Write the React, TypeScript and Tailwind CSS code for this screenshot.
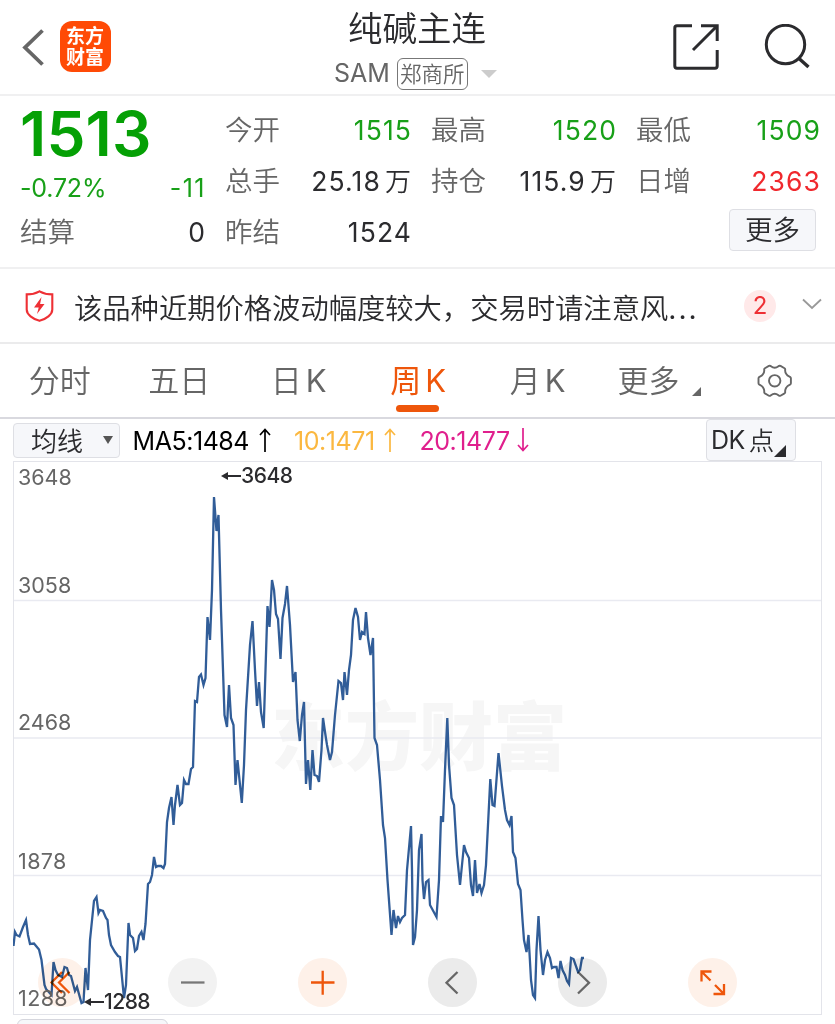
import { clsx } from "clsx"

// Weekly closes, as [x, y] on the chart canvas
const weekly = [
	[13.5, 946], [15, 932], [16.5, 935], [19.5, 936.5], [23, 927], [26, 920], [28, 935], [30, 944],
	[34, 943.5], [39, 949.5], [41.5, 960], [44.5, 985], [46, 989], [51.5, 995], [53.5, 962], [55.5, 970],
	[58, 975], [62, 977], [64.5, 967], [67, 968], [69, 975], [71, 976], [75, 991], [77, 987],
	[81.5, 1003], [83.5, 1002], [85.5, 968], [88, 990], [90, 940], [94, 901], [96.5, 897], [98.5, 913],
	[100, 910], [103, 911], [106, 918], [107.5, 920], [109, 935], [111, 945], [115, 952], [118, 956],
	[120, 957], [124, 998], [126, 985], [128.5, 923], [130, 935], [133, 938], [135, 951], [137, 949],
	[139, 936], [141.5, 932], [143.5, 940], [145.5, 924], [148, 884], [150, 882], [152, 875], [154, 857],
	[156, 867], [158, 866], [161, 866], [163.5, 868], [165, 864], [167, 822], [169, 808], [171.5, 797],
	[173.5, 825], [175, 805], [177.5, 785], [180, 805], [182, 803], [184, 780], [186, 784], [188.5, 784],
	[191, 769], [193, 767], [195, 701], [197, 702], [199, 677], [201, 674.5], [203.5, 685], [205.5, 678],
	[207.5, 617], [210, 640], [212, 590], [214, 497], [216.5, 531], [218.5, 515], [221, 610], [224.5, 715],
	[227, 727], [229, 685], [231, 718], [233.5, 725], [235.5, 785], [237.5, 760], [239, 775], [241.8, 803],
	[244, 765], [246, 710], [250, 645], [252.5, 621], [255, 670], [257, 706], [259, 682], [261, 712],
	[263.7, 728], [267.5, 606], [269.5, 627], [272, 580], [274, 590], [276, 614], [278, 619], [280.5, 659],
	[282.5, 618], [285, 604], [287, 586], [290, 625], [293, 682], [295.5, 672], [297.5, 720], [299.8, 741],
	[302, 715], [304, 702], [306, 784], [308, 760], [310.3, 790], [312.5, 750], [314.5, 775], [317, 776],
	[319, 782], [321.5, 750], [323, 718], [325, 732], [327, 745], [330, 760], [332, 752], [335, 715],
	[338.5, 681], [341, 683], [343, 700], [344.5, 672], [347, 695], [349, 670], [351, 655], [353, 620],
	[355.5, 608], [358, 617], [360, 640], [362, 632], [364.5, 634], [366, 612], [368, 638], [370.5, 655],
	[373, 638], [374.5, 738], [377, 745], [380, 780], [383, 825], [385, 838], [387.5, 880], [391.5, 935],
	[393.5, 910], [396, 928], [398, 916], [400, 922], [402, 918], [405, 915], [407, 870], [411, 826],
	[412, 870], [413, 945], [415, 937], [417, 910], [419, 850], [421.5, 834], [422.5, 880], [424, 899],
	[426, 882], [428.5, 880], [430, 905], [436.5, 917], [439, 880], [441, 816], [443, 822], [445, 770],
	[447.3, 718], [449, 765], [451.5, 798], [454, 805], [457, 855], [460, 885], [464, 845], [466, 852],
	[469, 858], [471, 885], [473, 896], [475, 860], [477, 893], [479.5, 884], [481.5, 893], [484, 885],
	[486, 865], [490.3, 779], [492.5, 805], [494.5, 806], [498.5, 753], [502, 786], [505, 810], [507, 820],
	[509.5, 825], [511.5, 816], [513, 852], [515.5, 858], [518, 884], [520.5, 890], [522.5, 920], [524, 940],
	[526.5, 952], [528.5, 935], [531, 980], [533, 995], [535, 998], [536.5, 950], [538.5, 916], [540.5, 950],
	[543, 975], [545, 960], [547.5, 952], [550, 958], [552, 968], [554, 967], [556.5, 967], [558.5, 978],
	[560.5, 961], [562.5, 970], [565, 975], [567, 981], [569, 984], [571, 958], [573.5, 959], [578, 972],
	[580, 970], [582, 958], [584, 958],
]

export default function App() {
	return (
		<div className="w-[835px] h-[1024px] overflow-hidden bg-white text-[#2b2b2e] font-['Inter','Noto_Sans_CJK_SC',sans-serif]">
			<Header />
			<Quote />
			<Notice />
			<Tabs />
			<Indicators />
			<Chart />

			{/* Volume panel selector, cut by the fold */}
			<div className="ml-[17px] mt-1 h-10 w-[151px] rounded-md border-[1.5px] border-[#d5d6dd] bg-[#f6f7fa]" />
		</div>
	)
}

function Header() {
	return (
		<header className="flex h-24 items-start border-b-2 border-[#f0f0f1]">
			<svg className="ml-5 mt-7 h-10 w-7" viewBox="0 0 28 40" fill="none" stroke="#666" strokeWidth="3.8">
				<path d="M22.5 2.5 5 19.5l17.5 17" />
			</svg>

			<div className="ml-3 mt-[21px] h-[51px] w-[51px] rounded-xl bg-[#ff4a06] px-[6px] pt-[5px] text-[19px] font-bold leading-[21px] text-white">
				东方财富
			</div>

			<div className="ml-[201px] flex w-[210px] flex-col items-center">
				<h1 className="mt-[9px] text-[34.5px] font-[350] leading-10">纯碱主连</h1>
				<div className="mt-[8px] flex h-[34px] items-center self-start pl-[22px]">
					<span className="text-[25px] text-[#666]">SAM</span>
					<span className="ml-[7px] flex h-8 w-[71px] items-center justify-center rounded-md border-[1.5px] border-[#777] text-[21.5px] font-[350] text-[#666]">
						郑商所
					</span>
					<svg className="ml-[13px] h-2 w-4" viewBox="0 0 16 8">
						<path d="M0 0h16L8 8z" fill="#ccc" />
					</svg>
				</div>
			</div>

			<svg className="ml-[151px] mt-[23.5px] h-[46px] w-[46px]" viewBox="0 0 46 46" fill="none" stroke="#2b2b2e" strokeWidth="3">
				<path d="M19 1.8H4q-2.2 0-2.2 2.2v38q0 2.2 2.2 2.2h38q2.2 0 2.2-2.2V26" />
				<path d="M28 1.8h16.2V17M43.5 2.5 20 26" />
			</svg>
			<svg className="ml-[45px] mt-6 h-[46px] w-[46px]" viewBox="0 0 46 46" fill="none" stroke="#2b2b2e" strokeWidth="3">
				<circle cx="21.5" cy="20.5" r="19.2" />
				<path d="m35 34.5 9.5 8.5" strokeWidth="3.4" />
			</svg>
		</header>
	)
}

function Quote() {
	return (
		<section className="grid h-[173px] grid-cols-[185px_186px_185px_184px] gap-x-5 border-b-2 border-[#f0f0f1] pl-5 pt-[9px]">
			<div>
				<div className="h-[51px] text-[62px] font-semibold leading-[57px] tracking-[0.2px] text-[#05a005]">1513</div>
				<div className="flex h-[51px] items-center justify-between pt-[14px] text-[25px] text-[#18a018]">
					<span className="tracking-[-0.2px]">-0.72%</span>
					<span className="tracking-[1.5px] mr-[-1px]">-11</span>
				</div>
				<Stat label="结算" value="0" />
			</div>
			<div>
				<Stat label="今开" value="1515" color="text-[#18a018]" />
				<Stat label="总手" value="25.18" unit="万" />
				<Stat label="昨结" value="1524" />
			</div>
			<div>
				<Stat label="最高" value="1520" color="text-[#18a018]" />
				<Stat label="持仓" value="115.9" unit="万" />
			</div>
			<div>
				<Stat label="最低" value="1509" color="text-[#18a018]" />
				<Stat label="日增" value="2363" color="text-[#f0282d]" />
				<button className="ml-auto mr-[4px] mt-[2px] flex h-[42px] w-[87px] items-center justify-center rounded border-[1.5px] border-[#dedfe4] bg-[#f6f7fa] pt-[2px] text-[27.5px] font-[350]">
					更多
				</button>
			</div>
		</section>
	)
}

function Stat({ label, value, unit, color }: any) {
	return (
		<div className="flex h-[51px] items-center justify-between">
			<span className="text-[27.5px] font-[350] text-[#666]">{label}</span>
			<span className={clsx("mr-[-1px] flex items-center text-[26.5px] tracking-[1.1px]", color)}>
				{value}
				{unit && <span className="ml-[4px] text-[26px] font-[350]">{unit}</span>}
			</span>
		</div>
	)
}

function Notice() {
	return (
		<section className="flex h-[75px] items-center border-b-2 border-[#ebebec]">
			<svg className="ml-[25px] h-8 w-[29px]" viewBox="0 0 29 32" fill="none">
				<path
					d="M14.5 1.3c4 2.2 8.5 3.1 12.8 3.1v15.1c0 5-6 9.5-12.8 11.3C7.7 29 1.7 24.5 1.7 19.5V4.4c4.3 0 8.8-.9 12.8-3.1z"
					stroke="#ee3035"
					strokeWidth="2.1"
				/>
				<path d="M16.5 7 9 17.5h4.7L12 24l7.5-10h-4.4z" fill="#ee3035" />
			</svg>
			<p className="ml-[20px] w-[640px] whitespace-nowrap pt-[7px] text-[28.3px] font-[350]">
				该品种近期价格波动幅度较大，交易时请注意风<span className="font-['Inter'] font-normal tracking-[2px]">...</span>
			</p>
			<span className="ml-[30px] flex h-8 w-8 items-center justify-center rounded-full bg-[#ffe9e9] text-[24px] text-[#ee2f34]">
				2
			</span>
			<svg className="-mt-1 ml-[26px] h-3 w-5" viewBox="0 0 20 12" fill="none" stroke="#999" strokeWidth="1.8">
				<path d="m1 1.5 9 8.5 9-8.5" />
			</svg>
		</section>
	)
}

function Tabs() {
	return (
		<nav className="flex h-[75px] items-center border-b-2 border-[#d9d9df] text-[31px] font-[350] text-[#666]">
			<Tab>分时</Tab>
			<Tab>五日</Tab>
			<Tab>
				日<Latin>K</Latin>
			</Tab>
			<Tab active>
				周<Latin>K</Latin>
			</Tab>
			<Tab>
				月<Latin>K</Latin>
			</Tab>
			<div className="ml-[20px] flex items-center pt-[2px]">
				更多
				<svg className="ml-[12px] mt-5 h-[9px] w-[9px]" viewBox="0 0 9 9">
					<path d="M9 0v9H0z" fill="#666" />
				</svg>
			</div>
			<svg className="ml-[56.5px] h-9 w-9" viewBox="0 0 36 36" fill="none" stroke="#666" strokeWidth="1.9">
				<path d="M17.7 4.8C20 4.8 21 3.6 22 2.9Q22.7 2.5 23.5 2.9L27.5 5.2Q28.3 5.7 28.2 6.6C28 8 28.2 9.5 29.3 11C30.3 12.8 31.8 13.3 33 13.9Q33.9 14.4 33.9 15.3V20.3Q33.9 21.2 33 21.7C31.8 22.3 30.3 22.8 29.3 24.6C28.2 26.1 28 27.6 28.2 29Q28.3 29.9 27.5 30.4L23.5 32.7Q22.7 33.1 22 32.7C21 32 20 30.8 17.7 30.8C15.4 30.8 14.4 32 13.4 32.7Q12.7 33.1 11.9 32.7L7.9 30.4Q7.1 29.9 7.2 29C7.4 27.6 7.2 26.1 6.1 24.6C5.1 22.8 3.6 22.3 2.4 21.7Q1.5 21.2 1.5 20.3V15.3Q1.5 14.4 2.4 13.9C3.6 13.3 5.1 12.8 6.1 11C7.2 9.5 7.4 8 7.2 6.6Q7.1 5.7 7.9 5.2L11.9 2.9Q12.7 2.5 13.4 2.9C14.4 3.6 15.4 4.8 17.7 4.8z" />
				<circle cx="17.7" cy="17.8" r="5.7" />
			</svg>
		</nav>
	)
}

function Tab({ active, children }: any) {
	return (
		<div
			className={clsx(
				"relative flex h-full w-[119.5px] items-center justify-center pt-[2px]",
				active && "font-normal text-[#ee560b]"
			)}
		>
			{children}
			{active && <span className="absolute bottom-[5px] left-[37px] h-[7px] w-[43px] rounded-full bg-[#ee560b]" />}
		</div>
	)
}

function Latin({ children }: any) {
	return <span className="ml-1 text-[31px] font-normal">{children}</span>
}

function Indicators() {
	return (
		<div className="flex h-[42px] items-start text-[25px]">
			<button className="ml-[13px] mt-1 flex h-[35px] w-[107px] items-center rounded border-[1.5px] border-[#dedfe4] bg-[#f6f7fa] pl-[17px] pt-[2px] text-[26px] font-[350]">
				均线
				<svg className="-mt-1 ml-[20px] h-2 w-[10px]" viewBox="0 0 10 8">
					<path d="M0 0h10L5 8z" fill="#555" />
				</svg>
			</button>
			<Average color="text-black" text="MA5:1484" width="w-[149px]" />
			<Average color="text-[#fbb840]" text="10:1471" width="w-[113px]" />
			<Average color="text-[#e01f8d]" text="20:1477" width="w-[120px]" down />
			<button className="ml-auto mr-[39px] flex h-[42px] w-[90px] items-center rounded border-[1.5px] border-[#dedfe4] bg-[#f6f7fa] pl-[4px] pt-[2px] text-[25px]">
				<span className="tracking-[-0.5px]">DK</span>
				<span className="ml-[4px] text-[25.5px] font-[350]">点</span>
				<svg className="mt-[19px] h-3 w-3 shrink-0" viewBox="0 0 12 12">
					<path d="M12 0v12H0z" fill="#2b2b2e" />
				</svg>
			</button>
		</div>
	)
}

function Average({ color, text, width, down }: any) {
	return (
		<div className={clsx("ml-[12.5px] flex h-[45px] items-center justify-between pr-[11px]", width, color)}>
			<span className="tracking-[-0.45px]">{text}</span>
			<svg
				className={clsx("-mt-1 h-6 w-3", down && "rotate-180")}
				viewBox="0 0 12 24"
				fill="none"
				stroke="currentColor"
				strokeWidth="1.7"
			>
				<path d="M6 24V1.5M1 7l5-5.500L11 7" />
			</svg>
		</div>
	)
}

function Chart() {
	return (
		<div className="relative ml-[13px] h-[554px] w-[809px] border-[1.5px] border-[#e3e4ea] text-[21.5px] leading-7 text-[#666]">
			{/* Watermark */}
			<div className="absolute left-[257px] top-[225px] text-[74px] font-black leading-[100px] text-[#f6f6f6]">东方财富</div>

			{/* Grid and price line */}
			<svg className="absolute left-[-1px] top-[-1px] h-[554px] w-[809px]" viewBox="13 461 809 554" fill="none">
				<path d="M14 600.5h807M14 738h807M14 875.5h807" stroke="#e9eaf1" strokeWidth="1.6" />
				<polyline points={weekly.map((p) => p.join(",")).join(" ")} stroke="#315d98" strokeWidth="2.3" />
			</svg>

			{/* Price scale */}
			<span className="absolute left-[4px] top-[1px]">3648</span>
			<span className="absolute left-[4px] top-[109px]">3058</span>
			<span className="absolute left-[4px] top-[246px]">2468</span>
			<span className="absolute left-[4px] top-[385px] tracking-[0.4px]">1878</span>
			<span className="absolute left-[4px] top-[522px] tracking-[0.4px]">1288</span>

			{/* High and low marks */}
			<Mark className="left-[207px] top-0" value="3648" />
			<Mark className="left-[70px] top-[526px]" value="1288" />

			{/* Floating controls */}
			<div className="absolute left-[24px] top-[496px] flex gap-[81px] mix-blend-multiply">
				<Control color="bg-[#fef1e9]" stroke="#ee560b">
					<path d="M24 14 13.5 24.5 24 35M31.5 14 21 24.5l10.5 10.5" />
				</Control>
				<Control color="bg-[#f2f2f2]" stroke="#777">
					<path d="M13 24.5h23.5" />
				</Control>
				<Control color="bg-[#fef1e9]" stroke="#ee560b">
					<path d="M13 24.5h23.5M24.7 12.7v24" />
				</Control>
				<Control color="bg-[#ebebeb]" stroke="#666">
					<path d="M29.5 14 18.5 24.7l11 10.8" />
				</Control>
				<Control color="bg-[#ebebeb]" stroke="#666">
					<path d="m20 14 11 10.7-11 10.8" />
				</Control>
				<Control color="bg-[#fef1e9]" stroke="#ee560b">
					<path d="M13.5 23.5V13.5h10M14 14l8.5 8.5M36 26v10H25.5M35.5 35.5 27 27" />
				</Control>
			</div>
		</div>
	)
}

function Mark({ className, value }: any) {
	return (
		<div className={clsx("absolute flex items-center font-medium text-[#2b2b2e]", className)}>
			<svg className="h-3 w-5" viewBox="0 0 20 12" fill="none">
				<path d="M3 6h17" stroke="#2b2b2e" strokeWidth="2" />
				<path d="m0 6 7-4v8z" fill="#2b2b2e" />
			</svg>
			<span className="text-[21px] tracking-[-0.5px]">{value}</span>
		</div>
	)
}

function Control({ color, stroke, children }: any) {
	return (
		<button className={clsx("h-[49px] w-[49px] rounded-full", color)}>
			<svg className="h-[49px] w-[49px]" viewBox="0 0 49 49" fill="none" stroke={stroke} strokeWidth="2.3">
				{children}
			</svg>
		</button>
	)
}
